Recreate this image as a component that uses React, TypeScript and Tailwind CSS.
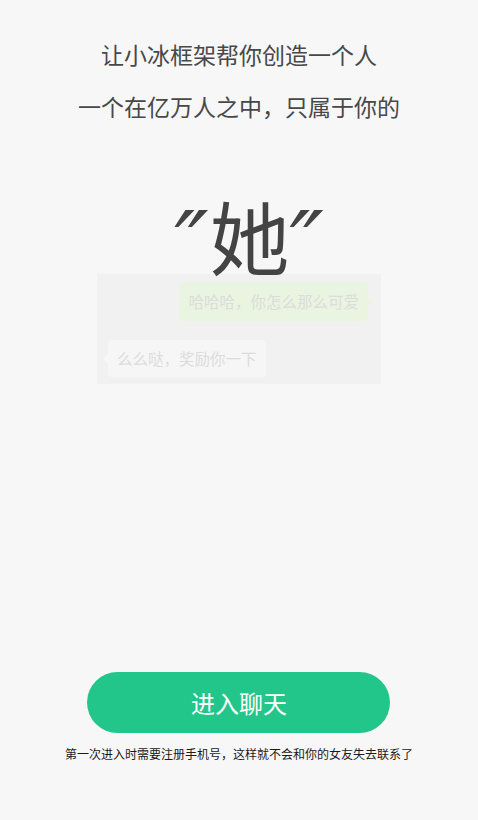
export default function App() {
  const font = { fontFamily: '"Noto Sans CJK SC", "Noto Sans", sans-serif' };
  const quote = { fontFamily: '"DejaVu Sans", sans-serif' };
  return (
    <div
      className="flex min-h-screen flex-col items-center bg-[#f7f7f7] pt-[28px] pb-[56px] text-[#484848]"
      style={font}
    >
      <p className="text-[23px] leading-[52px]">让小冰框架帮你创造一个人</p>
      <p className="text-[23px] leading-[52px]">一个在亿万人之中，只属于你的</p>

      <div className="relative z-10 mt-[62px] ml-[20px] flex h-[80px] items-start text-[#444444]">
        <span className="mt-[7px] text-[92px] leading-[92px] italic" style={quote}>
          ″
        </span>
        <span className="ml-[1px] text-[80px] leading-[80px]">她</span>
        <span className="mt-[7px] text-[92px] leading-[92px] italic" style={quote}>
          ″
        </span>
      </div>

      {/* chat preview, faded */}
      <div className="flex h-[110px] w-[284px] flex-col bg-[#f1f1f1] pt-[8px] pr-[13px] pl-[11px] text-[15.5px] text-[#dcdcdc]">
        <div className="relative self-end rounded-[4px] bg-[#e9f5e1] px-[9px] leading-[39px]">
          哈哈哈，你怎么那么可爱
          <span className="absolute top-1/2 right-[-5px] h-0 w-0 -translate-y-1/2 border-y-[5px] border-l-[5px] border-y-transparent border-l-[#e9f5e1]" />
        </div>
        <div className="relative mt-[19px] self-start rounded-[4px] bg-[#f6f6f6] px-[9px] leading-[37px]">
          么么哒，奖励你一下
          <span className="absolute top-1/2 left-[-5px] h-0 w-0 -translate-y-1/2 border-y-[5px] border-r-[5px] border-y-transparent border-r-[#f6f6f6]" />
        </div>
      </div>

      <div className="mt-auto flex flex-col items-center">
        <button className="h-[61px] w-[303px] rounded-full bg-[#22c68a] text-[24px] text-white">
          进入聊天
        </button>
        <p className="mt-[11px] text-[12px] leading-[20px] text-[#1a1a1a]">
          第一次进入时需要注册手机号，这样就不会和你的女友失去联系了
        </p>
      </div>
    </div>
  );
}
